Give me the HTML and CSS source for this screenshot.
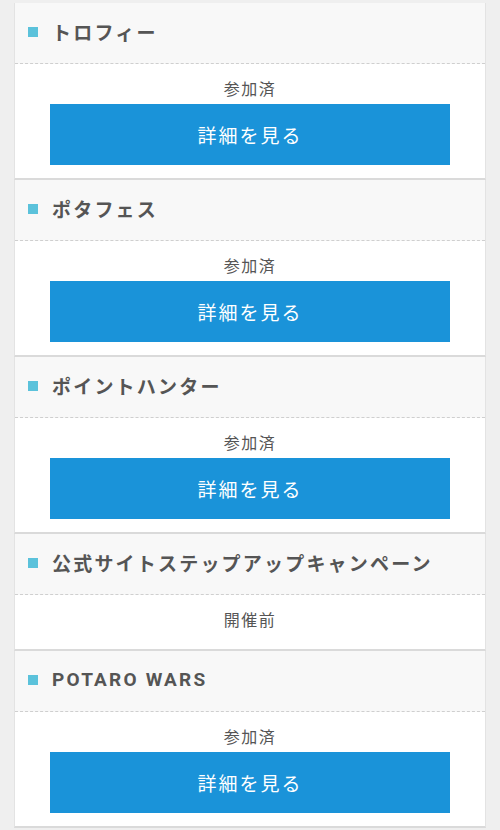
FILE: index.html
```html
<!DOCTYPE html>
<html lang="ja">
<head>
<meta charset="utf-8">
<link rel="stylesheet" href="styles.css">
</head>
<body>
<div class="list">
  <section class="card">
    <h2 class="card-head"><span class="mark"></span>トロフィー</h2>
    <div class="card-body">
      <p class="status">参加済</p>
      <a class="btn">詳細を見る</a>
    </div>
  </section>
  <section class="card">
    <h2 class="card-head"><span class="mark"></span>ポタフェス</h2>
    <div class="card-body">
      <p class="status">参加済</p>
      <a class="btn">詳細を見る</a>
    </div>
  </section>
  <section class="card">
    <h2 class="card-head"><span class="mark"></span>ポイントハンター</h2>
    <div class="card-body">
      <p class="status">参加済</p>
      <a class="btn">詳細を見る</a>
    </div>
  </section>
  <section class="card">
    <h2 class="card-head"><span class="mark"></span>公式サイトステップアップキャンペーン</h2>
    <div class="card-body only">
      <p class="status">開催前</p>
    </div>
  </section>
  <section class="card">
    <h2 class="card-head"><span class="mark"></span>POTARO WARS</h2>
    <div class="card-body">
      <p class="status">参加済</p>
      <a class="btn">詳細を見る</a>
    </div>
  </section>
</div>
</body>
</html>
```
FILE: styles.css
```css
html, body {
  margin: 0;
  padding: 0;
  background: #efefef;
}
body {
  font-family: Roboto, "Noto Sans CJK JP", sans-serif;
  color: #555;
}
.list {
  padding: 3px 14px 0;
  display: flex;
  flex-direction: column;
}
.card {
  background: #fff;
  border: 1px solid #e3e3e3;
  border-top: none;
  border-bottom: 2px solid #dadada;
}
.card-head {
  margin: 0;
  height: 57px;
  padding: 0 0 3px 13px;
  display: flex;
  align-items: center;
  background: #f8f8f8;
  border-bottom: 1px dashed #cfcfcf;
  font-size: 19px;
  font-weight: 700;
  letter-spacing: 2.2px;
  color: #555;
  white-space: nowrap;
}
.mark {
  width: 10px;
  height: 10px;
  background: #5bc2db;
  margin-right: 14px;
  flex: none;
}
.card-body {
  padding: 14px 35px 13px;
  display: flex;
  flex-direction: column;
  align-items: center;
}
.card-body.only {
  padding-bottom: 14px;
}
.status {
  margin: 0 0 2px;
  font-size: 16px;
  line-height: 24px;
  letter-spacing: 1.5px;
  color: #555;
}
.btn {
  display: flex;
  align-items: center;
  justify-content: center;
  align-self: stretch;
  height: 61px;
  background: #1a93d9;
  color: #fff;
  font-size: 19px;
  letter-spacing: 2px;
  text-decoration: none;
}
```
